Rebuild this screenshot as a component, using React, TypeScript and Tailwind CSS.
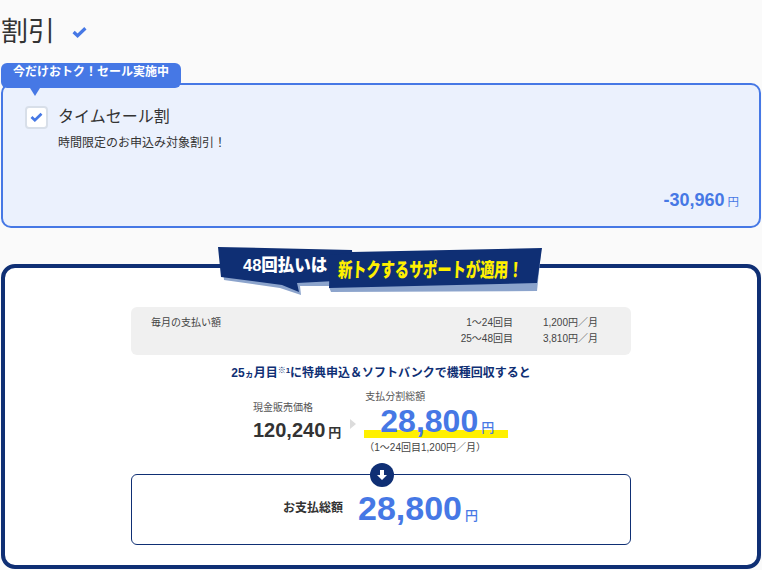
const jp = '"Liberation Sans", "Noto Sans CJK JP", sans-serif';

const Check = ({ className }: { className: string }) => (
  <svg viewBox="0 0 14 11" className={className}>
    <path d="M1.5 5.5 5.2 9 12.5 2" fill="none" stroke="#4678e5" strokeWidth="3" />
  </svg>
);

const Banner = () => (
  <div className="absolute left-[209px] top-[-23px] h-[50px] w-[335px]">
    <svg viewBox="0 0 335 50" className="absolute inset-0 h-full w-full">
      <polygon points="7,6 140,8 140,41 86,41 87,50 66,43 10,35" fill="#8ca4cc" />
      <polygon points="115,42 327,8 323,46 117,47" fill="#8ca4cc" />
      <polygon points="4,2 138,5 140,35 83,38 85,47 68,40 7,32" fill="#0f2f74" />
      <polygon points="116,10 138,8 138,7 328,3 323,38 115,43" fill="#0f2f74" />
    </svg>
    <span className="absolute left-[29px] top-[8px] text-[16.5px] leading-[24px] font-black whitespace-nowrap text-white">
      48回払いは
    </span>
    <span className="absolute left-[124px] top-[11px] origin-left skew-x-[-4deg] scale-x-[0.71] text-[20px] leading-[28px] font-black whitespace-nowrap text-[#fff000]">
      新トクするサポートが適用！
    </span>
  </div>
);

export default function App() {
  return (
    <div className="h-[570px] w-[762px] overflow-hidden bg-[#fafafa] text-[#333]" style={{ fontFamily: jp }}>
      <div className="flex h-[83px] items-start pl-[1px] pt-[18px]">
        <h1 className="text-[27px] leading-[28px] font-normal">割引</h1>
        <Check className="ml-[17px] mt-[8px] h-[12px] w-[15px]" />
      </div>

      <div className="relative mx-[1px] h-[145px] rounded-[10px] border-2 border-[#4678e5] bg-[#ebf1fd]">
        <div className="absolute left-[-2px] top-[-22px] flex h-[25px] w-[180px] items-start justify-center rounded-[6px] bg-[#4678e5] pt-[1px] text-[12px] leading-[16px] font-bold whitespace-nowrap text-white">
          今だけおトク！セール実施中
          <span className="absolute left-[29px] top-[25px] h-0 w-0 border-x-[5px] border-t-[8px] border-x-transparent border-t-[#4678e5]" />
        </div>
        <div className="flex items-center pl-[22px] pt-[20px]">
          <div className="flex h-[23px] w-[23px] items-center justify-center rounded-[4px] border-2 border-[#d8dfe9] bg-white">
            <Check className="h-[10px] w-[13px]" />
          </div>
          <span className="ml-[10px] text-[16px] leading-[24px]">タイムセール割</span>
        </div>
        <p className="pl-[55px] pt-[5px] text-[12px] leading-[18px]">時間限定のお申込み対象割引！</p>
        <div className="absolute bottom-[14px] right-[20px] flex items-baseline text-[#4678e5]">
          <span className="text-[18px] leading-[24px] font-bold">-30,960</span>
          <span className="ml-[3px] text-[11.5px]">円</span>
        </div>
      </div>

      <div className="relative mx-[1px] mt-[36px] h-[305px] rounded-[14px] border-4 border-[#0f2f74] bg-white">
        <Banner />
        <div className="mx-auto mt-[39px] flex h-[48px] w-[500px] items-start rounded-[6px] bg-[#f0f0f0] px-[20px] pt-[8px] text-[10px] leading-[16px] text-[#444]">
          <span className="flex-1">毎月の支払い額</span>
          <div className="grid grid-cols-[auto_85px] justify-items-end">
            <span>1〜24回目</span>
            <span>1,200円／月</span>
            <span>25〜48回目</span>
            <span>3,810円／月</span>
          </div>
          <span className="w-[13px]" />
        </div>

        <p className="mt-[10px] text-center text-[12px] leading-[16px] font-bold text-[#0f2f74]">
          25<span className="text-[9px]">ヵ</span>月目<sup className="text-[8px]">※1</sup>に特典申込＆ソフトバンクで機種回収すると
        </p>

        <div className="ml-[248px] mt-[8px] flex">
          <div className="pt-[10px]">
            <p className="text-[10px] leading-[16px] text-[#555]">現金販売価格</p>
            <p className="flex items-baseline leading-[28px] font-bold text-[#333]">
              <span className="text-[20px]">120,240</span>
              <span className="ml-[3px] text-[13px]">円</span>
            </p>
          </div>
          <span className="ml-[9px] mt-[29px] h-0 w-0 border-y-[5px] border-l-[6px] border-y-transparent border-l-[#dcdcdc]" />
          <div className="ml-[8px]">
            <p className="pl-[1px] text-[10px] leading-[14px] text-[#555]">支払分割総額</p>
            <div className="relative flex h-[32px] w-[144px] items-baseline pl-[16px] text-[#4678e5]">
              <span className="absolute bottom-[-2px] left-0 h-[8px] w-[144px] bg-[#fff000]" />
              <span className="relative text-[32px] leading-[35px] font-bold">28,800</span>
              <span className="relative ml-[3px] text-[13px] font-medium">円</span>
            </div>
            <p className="mt-[5px] text-[10px] leading-[14px] text-[#444]">（1〜24回目1,200円／月）</p>
          </div>
        </div>

        <div className="relative mx-auto mt-[19px] flex h-[71px] w-[500px] items-center rounded-[6px] border border-[#0f2f74] bg-white pb-[4px] pl-[151px]">
          <span className="absolute left-[238px] top-[-12px] flex h-[24px] w-[24px] items-center justify-center rounded-full bg-[#0f2f74]">
            <svg viewBox="0 0 12 12" className="h-[12px] w-[12px]">
              <path d="M4 1h4v5h3L6 11 1 6h3z" fill="#fff" />
            </svg>
          </span>
          <span className="text-[12px] font-bold text-[#333]">お支払総額</span>
          <span className="ml-[15px] text-[34px] leading-[40px] font-bold text-[#4678e5]">28,800</span>
          <span className="ml-[3px] mt-[17px] text-[13px] font-medium text-[#4678e5]">円</span>
        </div>
      </div>
    </div>
  );
}
